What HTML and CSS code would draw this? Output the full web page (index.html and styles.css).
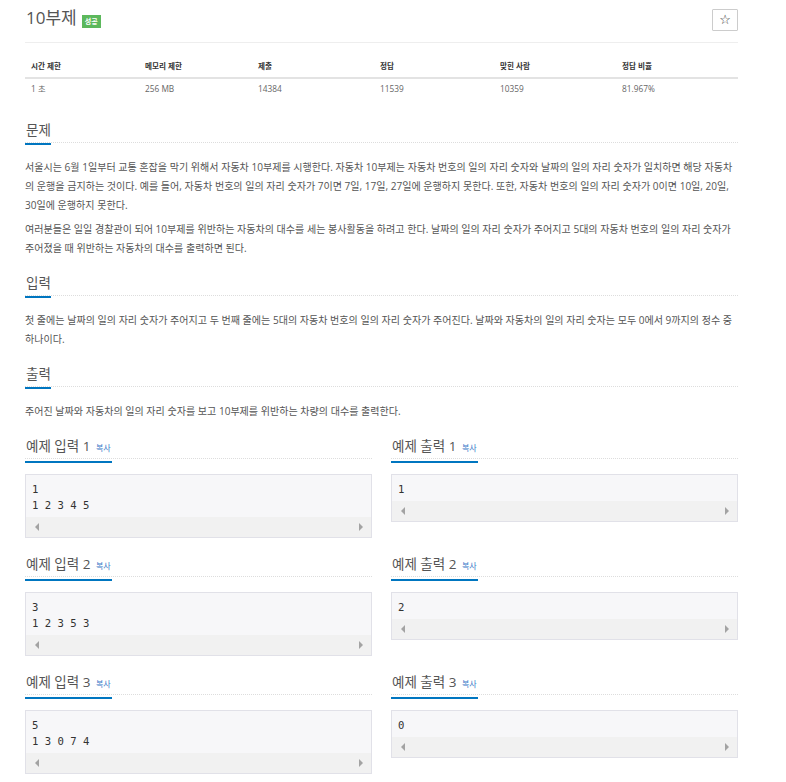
FILE: index.html
```html
<!DOCTYPE html>
<html lang="ko">
<head>
<meta charset="utf-8">
<title>10부제</title>
<link rel="stylesheet" href="styles.css">
</head>
<body>
<div class="page">
  <div class="title-row">
    <div class="title">
      <span class="title-text">10부제</span>
      <span class="badge">성공</span>
    </div>
    <button class="star" type="button">☆</button>
  </div>

  <div class="info">
    <div class="info-head">시간 제한</div>
    <div class="info-head">메모리 제한</div>
    <div class="info-head">제출</div>
    <div class="info-head">정답</div>
    <div class="info-head">맞힌 사람</div>
    <div class="info-head">정답 비율</div>
    <div class="info-cell">1 초</div>
    <div class="info-cell">256 MB</div>
    <div class="info-cell">14384</div>
    <div class="info-cell">11539</div>
    <div class="info-cell">10359</div>
    <div class="info-cell">81.967%</div>
  </div>

  <section class="section">
    <div class="headline"><h2>문제</h2></div>
    <div class="desc">
      <p>서울시는 6월 1일부터 교통 혼잡을 막기 위해서 자동차 10부제를 시행한다. 자동차 10부제는 자동차 번호의 일의 자리 숫자와 날짜의 일의 자리 숫자가 일치하면 해당 자동차의 운행을 금지하는 것이다. 예를 들어, 자동차 번호의 일의 자리 숫자가 7이면 7일, 17일, 27일에 운행하지 못한다. 또한, 자동차 번호의 일의 자리 숫자가 0이면 10일, 20일, 30일에 운행하지 못한다.</p>
      <p>여러분들은 일일 경찰관이 되어 10부제를 위반하는 자동차의 대수를 세는 봉사활동을 하려고 한다. 날짜의 일의 자리 숫자가 주어지고 5대의 자동차 번호의 일의 자리 숫자가 주어졌을 때 위반하는 자동차의 대수를 출력하면 된다.</p>
    </div>
  </section>

  <section class="section">
    <div class="headline"><h2>입력</h2></div>
    <div class="desc">
      <p>첫 줄에는 날짜의 일의 자리 숫자가 주어지고 두 번째 줄에는 5대의 자동차 번호의 일의 자리 숫자가 주어진다. 날짜와 자동차의 일의 자리 숫자는 모두 0에서 9까지의 정수 중 하나이다.</p>
    </div>
  </section>

  <section class="section">
    <div class="headline"><h2>출력</h2></div>
    <div class="desc">
      <p>주어진 날짜와 자동차의 일의 자리 숫자를 보고 10부제를 위반하는 차량의 대수를 출력한다.</p>
    </div>
  </section>

  <div class="samples">
    <section class="sample">
      <div class="headline"><h2>예제 입력 1 <a class="copy">복사</a></h2></div>
      <div class="box"><pre>1
1 2 3 4 5</pre><div class="scroll"><span class="arr-l"></span><span class="arr-r"></span></div></div>
    </section>
    <section class="sample">
      <div class="headline"><h2>예제 출력 1 <a class="copy">복사</a></h2></div>
      <div class="box"><pre>1</pre><div class="scroll"><span class="arr-l"></span><span class="arr-r"></span></div></div>
    </section>
    <section class="sample">
      <div class="headline"><h2>예제 입력 2 <a class="copy">복사</a></h2></div>
      <div class="box"><pre>3
1 2 3 5 3</pre><div class="scroll"><span class="arr-l"></span><span class="arr-r"></span></div></div>
    </section>
    <section class="sample">
      <div class="headline"><h2>예제 출력 2 <a class="copy">복사</a></h2></div>
      <div class="box"><pre>2</pre><div class="scroll"><span class="arr-l"></span><span class="arr-r"></span></div></div>
    </section>
    <section class="sample">
      <div class="headline"><h2>예제 입력 3 <a class="copy">복사</a></h2></div>
      <div class="box"><pre>5
1 3 0 7 4</pre><div class="scroll"><span class="arr-l"></span><span class="arr-r"></span></div></div>
    </section>
    <section class="sample">
      <div class="headline"><h2>예제 출력 3 <a class="copy">복사</a></h2></div>
      <div class="box"><pre>0</pre><div class="scroll"><span class="arr-l"></span><span class="arr-r"></span></div></div>
    </section>
  </div>
</div>
</body>
</html>
```

FILE: styles.css
```css
* { box-sizing: border-box; }

html, body {
  margin: 0;
  padding: 0;
  background: #fff;
}

body {
  font-family: "Open Sans", "Noto Sans CJK KR", sans-serif;
  color: #555;
}

.page {
  width: 738px;
  padding-left: 25px;
}

.title-row {
  height: 43px;
  padding-bottom: 7px;
  display: flex;
  align-items: center;
  justify-content: space-between;
  border-bottom: 1px solid #eee;
}

.title {
  display: flex;
  align-items: center;
}

.title-text {
  font-size: 17px;
  line-height: 24px;
  color: #555;
  padding-left: 1px;
}

.badge {
  margin-left: 5px;
  margin-top: 7px;
  background: #5cb85c;
  color: #fff;
  font-size: 7px;
  font-weight: bold;
  line-height: 13px;
  height: 13px;
  padding: 0 3px;
}

.star {
  width: 26px;
  height: 22px;
  margin: 4px 0 0;
  padding: 0;
  background: #fff;
  border: 1px solid #ccc;
  border-radius: 1px;
  font-family: "DejaVu Sans", sans-serif;
  font-size: 13px;
  line-height: 20px;
  color: #333;
}

.info {
  margin-top: 12px;
  display: grid;
  grid-template-columns: 114px 113px 122px 120px 122px 122px;
}

.info-head {
  padding: 5px 6px;
  line-height: 12px;
  font-size: 7.6px;
  font-weight: bold;
  color: #333;
  border-bottom: 2px solid #e3e3e3;
}

.info-cell {
  padding: 4px 6px 6px;
  line-height: 12px;
  font-size: 8.3px;
  color: #666;
}

.section {
  margin-top: 17px;
}

.section + .section {
  margin-top: 13px;
}

.headline {
  border-bottom: 1px dotted #ddd;
  height: 25px;
}

.headline h2 {
  display: inline-block;
  margin: 0;
  padding: 0 0 3px 1px;
  font-size: 13.5px;
  font-weight: normal;
  line-height: 20px;
  color: #555;
  border-bottom: 2px solid #0076c0;
}

.copy {
  margin-left: 2px;
  margin-right: 1px;
  font-size: 8px;
  color: #3a7bc8;
}

.desc {
  margin-top: 15px;
  font-size: 10.05px;
  line-height: 19px;
  color: #555;
}

.desc p {
  margin: 0 0 5px;
}

.desc p:last-child {
  margin-bottom: 0;
}

.samples {
  margin-top: 13px;
  display: grid;
  grid-template-columns: 347px 347px;
  column-gap: 19px;
  row-gap: 14px;
  align-items: start;
}

.box {
  margin-top: 15px;
  border: 1px solid #e1e1e8;
  background: #f7f7f9;
}

.box pre {
  margin: 0;
  padding: 6px 6px 4px;
  font-family: "DejaVu Sans Mono", monospace;
  font-size: 10.6px;
  line-height: 16px;
  color: #333;
}

.scroll {
  height: 20px;
  background: #f1f1f1;
  display: flex;
  align-items: center;
  justify-content: space-between;
  padding: 0 8px 0 9px;
}

.arr-l {
  width: 0;
  height: 0;
  border-top: 4px solid transparent;
  border-bottom: 4px solid transparent;
  border-right: 4px solid #a3a3a3;
}

.arr-r {
  width: 0;
  height: 0;
  border-top: 4px solid transparent;
  border-bottom: 4px solid transparent;
  border-left: 4px solid #a3a3a3;
}
```
